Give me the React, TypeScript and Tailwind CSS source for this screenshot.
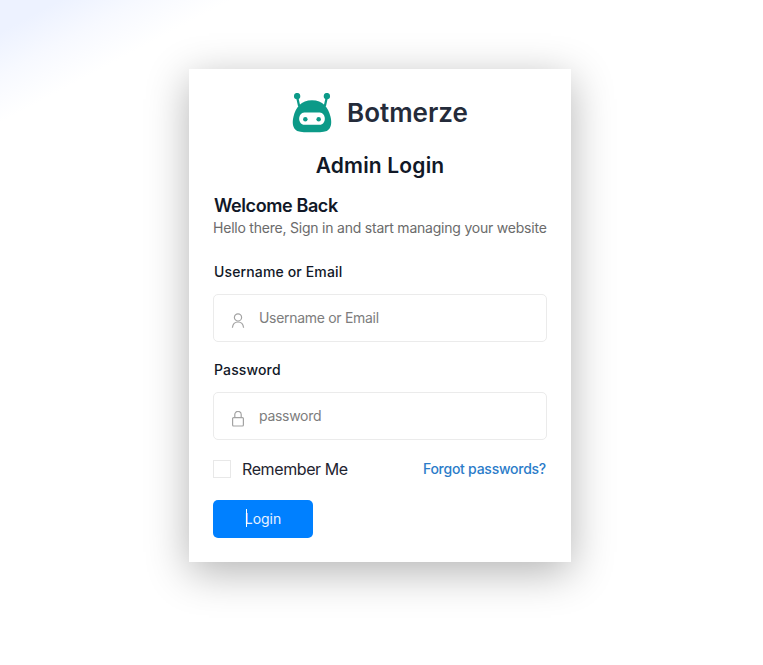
import React from 'react';

const font = { fontFamily: 'Inter, "Noto Sans", sans-serif' };

const BotLogo = () => (
  <svg width="40" height="40" viewBox="0 0 39 39" className="block">
    <circle cx="5" cy="3" r="3.1" fill="#0c9a88" />
    <circle cx="34" cy="3" r="3.1" fill="#0c9a88" />
    <path d="M5 4 7 13M34 4 32 13" stroke="#0c9a88" strokeWidth="2.2" fill="none" />
    <path
      d="M19.5 7C9 7 3.5 14 1.5 23 0 29 .5 34.5 5 37 9 38.3 14 38.3 19.5 38.3 25 38.3 30 38.3 34 37 38.5 34.5 39 29 37.5 23 35.5 14 30 7 19.5 7Z"
      fill="#0c9a88"
    />
    <path d="M12 19H27C30 19 32 22 32 25 32 28 30 31 27 31H12C9 31 7 28 7 25 7 22 9 19 12 19Z" fill="#fff" />
    <circle cx="13" cy="25.5" r="2.2" fill="#0c9a88" />
    <circle cx="26" cy="25.5" r="2.2" fill="#0c9a88" />
  </svg>
);

const UserIcon = () => (
  <svg width="14" height="16" viewBox="0 0 14 16" fill="none" stroke="#a3a3a3" strokeWidth="1.2">
    <circle cx="7" cy="4.4" r="3.6" />
    <path d="M1.4 14.8C1.8 11.2 4 9 7 9s5.2 2.2 5.6 5.8" />
  </svg>
);

const LockIcon = () => (
  <svg width="14" height="16" viewBox="0 0 14 16" fill="none" stroke="#a3a3a3" strokeWidth="1.2">
    <rect x="1.6" y="6.6" width="10.8" height="8.4" rx="1" />
    <path d="M3.8 6.6V3.6a3.2 3.2 0 0 1 6.4 0v3" />
  </svg>
);

const Field = ({ label, placeholder, icon }: { label: string; placeholder: string; icon: React.ReactNode }) => (
  <div>
    <label className="block pl-[1px] text-[14px] leading-[22px] font-medium tracking-[0.14px] text-[#111827]">{label}</label>
    <div className="mt-[11px] h-12 flex items-center border border-[#ebebeb] rounded-[5px] bg-white pl-[17px]">
      <span className="w-[14px] flex justify-center pt-[5px]">{icon}</span>
      <input
        readOnly
        placeholder={placeholder}
        className="ml-[14px] mb-[2px] flex-1 min-w-0 outline-none bg-transparent text-[14px] tracking-[-0.3px] placeholder:text-[#7d7d7d]"
      />
    </div>
  </div>
);

export default function App() {
  return (
    <div
      style={font}
      className="h-[665px] overflow-hidden bg-white bg-[linear-gradient(152deg,#edf2ff_0%,#edf2ff_3%,#f7f9ff_7%,#ffffff_11.5%)] flex justify-center pt-[69px] pr-[3px]"
    >
      <div className="w-[382px] h-[493px] bg-white shadow-[0_10px_40px_rgba(0,0,0,0.3)] px-6 pt-6">
        <div className="flex items-center justify-center gap-[15px] h-10">
          <BotLogo />
          <span className="text-[26px] leading-10 font-semibold text-[#242b3a]">Botmerze</span>
        </div>
        <h1 className="mt-[18px] text-center text-[21px] leading-[30px] font-semibold tracking-[0.18px] text-[#111827]">Admin Login</h1>
        <h2 className="mt-[12px] pl-[1px] text-[18px] leading-[25px] font-semibold tracking-[-0.4px] text-[#111827]">Welcome Back</h2>
        <p className="text-[14px] leading-[20px] tracking-[-0.22px] text-[#6b6b6b] whitespace-nowrap">
          Hello there, Sign in and start managing your website
        </p>
        <div className="mt-[23px] flex flex-col gap-[17px]">
          <Field label="Username or Email" placeholder="Username or Email" icon={<UserIcon />} />
          <Field label="Password" placeholder="password" icon={<LockIcon />} />
        </div>
        <div className="mt-[18px] flex items-center justify-between">
          <label className="flex items-center gap-[11px]">
            <span className="w-[18px] h-[18px] border border-[#e8e8e8] bg-white" />
            <span className="text-[16px] leading-[20px] text-[#1f2430] tracking-[-0.4px]">Remember Me</span>
          </label>
          <a href="#" className="mr-[1px] text-[14px] font-medium tracking-[-0.25px] text-[#2b7cc9]">Forgot passwords?</a>
        </div>
        <button className="mt-[21px] w-[100px] h-[38px] rounded-[5px] bg-[#0080ff] text-[#e8f2ff] text-[14px] pb-[2px] flex items-center justify-center relative">
          <span className="absolute left-[33px] top-[9px] w-px h-[18px] bg-white" />
          Login
        </button>
      </div>
    </div>
  );
}
